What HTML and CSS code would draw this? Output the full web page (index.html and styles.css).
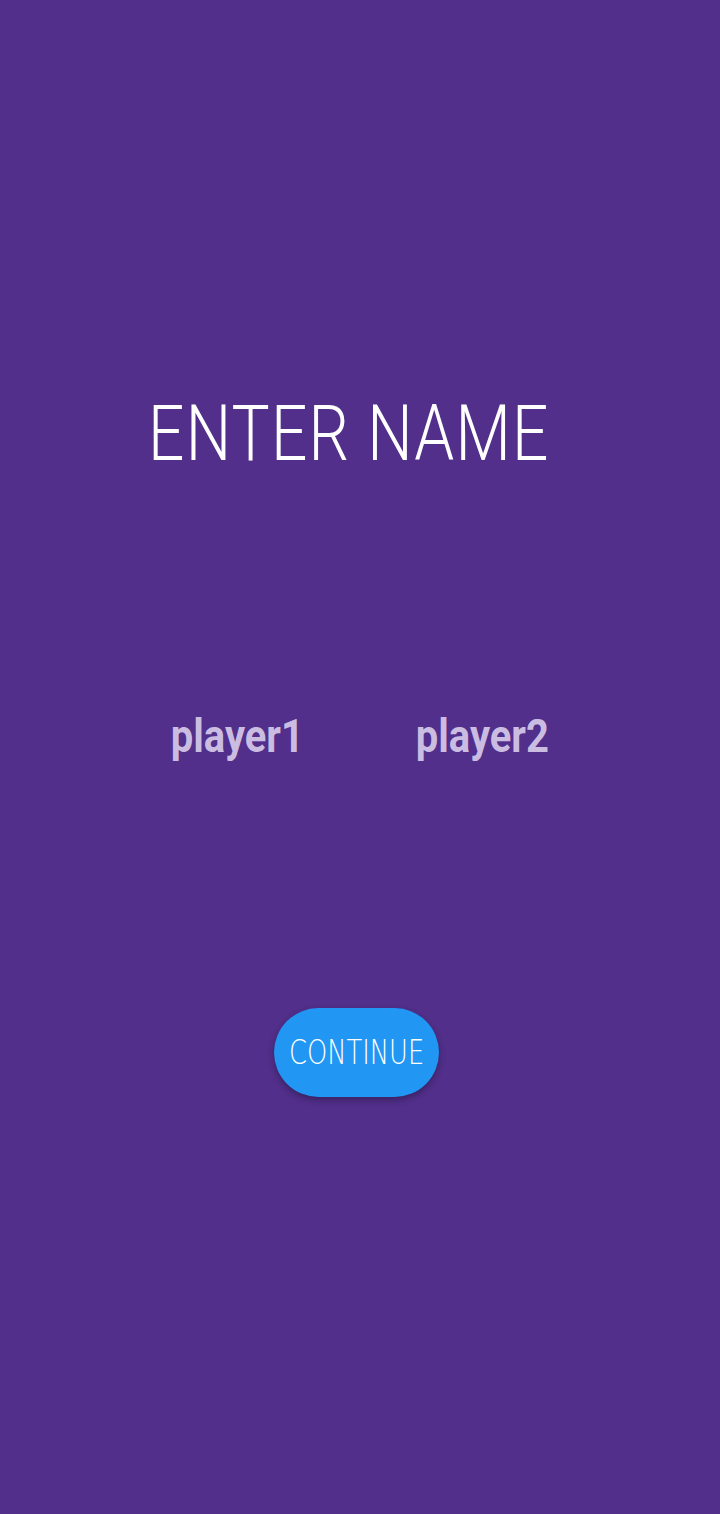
FILE: index.html
```html
<!DOCTYPE html>
<html>
<head>
<meta charset="utf-8">
<link rel="stylesheet" href="styles.css">
</head>
<body>
<main class="screen">
  <h1 class="title"><span class="title-text">ENTER NAME</span></h1>
  <div class="players">
    <div class="player"><span class="player-text">player1</span></div>
    <div class="player"><span class="player-text">player2</span></div>
  </div>
  <button class="continue"><span class="continue-text">CONTINUE</span></button>
</main>
</body>
</html>
```
FILE: styles.css
```css
html, body {
  margin: 0;
  padding: 0;
  background: #512f8a;
}
.screen {
  width: 720px;
  height: 1514px;
  display: flex;
  flex-direction: column;
  align-items: center;
  box-sizing: border-box;
  padding-top: 389px;
}
.title {
  margin: 0 0 0 -23px;
  font-family: Roboto, sans-serif;
  font-weight: 300;
  font-size: 77px;
  line-height: 90px;
  color: #ffffff;
  white-space: nowrap;
  letter-spacing: 1.5px;
}
.title-text {
  display: inline-block;
  transform: scaleX(0.83);
  transform-origin: center;
}
.players {
  margin-top: 229px;
  display: flex;
  gap: 88px;
}
.player {
  font-family: Roboto, sans-serif;
  font-weight: 700;
  font-size: 47px;
  line-height: 56px;
  color: #cbbde1;
  white-space: nowrap;
}
.player-text {
  display: inline-block;
  transform: scaleX(0.85);
  transform-origin: center;
}
.continue {
  margin: 244px 0 0 -7px;
  width: 165px;
  height: 89px;
  border: none;
  border-radius: 45px;
  background: #2196f3;
  color: #ffffff;
  font-family: "DejaVu Sans", sans-serif;
  font-weight: 200;
  font-size: 33px;
  padding: 0;
  box-shadow: 0 3px 6px rgba(0,0,0,0.3);
  white-space: nowrap;
  display: flex;
  align-items: center;
  justify-content: center;
}
.continue-text {
  display: inline-block;
  transform: scaleX(0.78);
  transform-origin: center;
}
```
